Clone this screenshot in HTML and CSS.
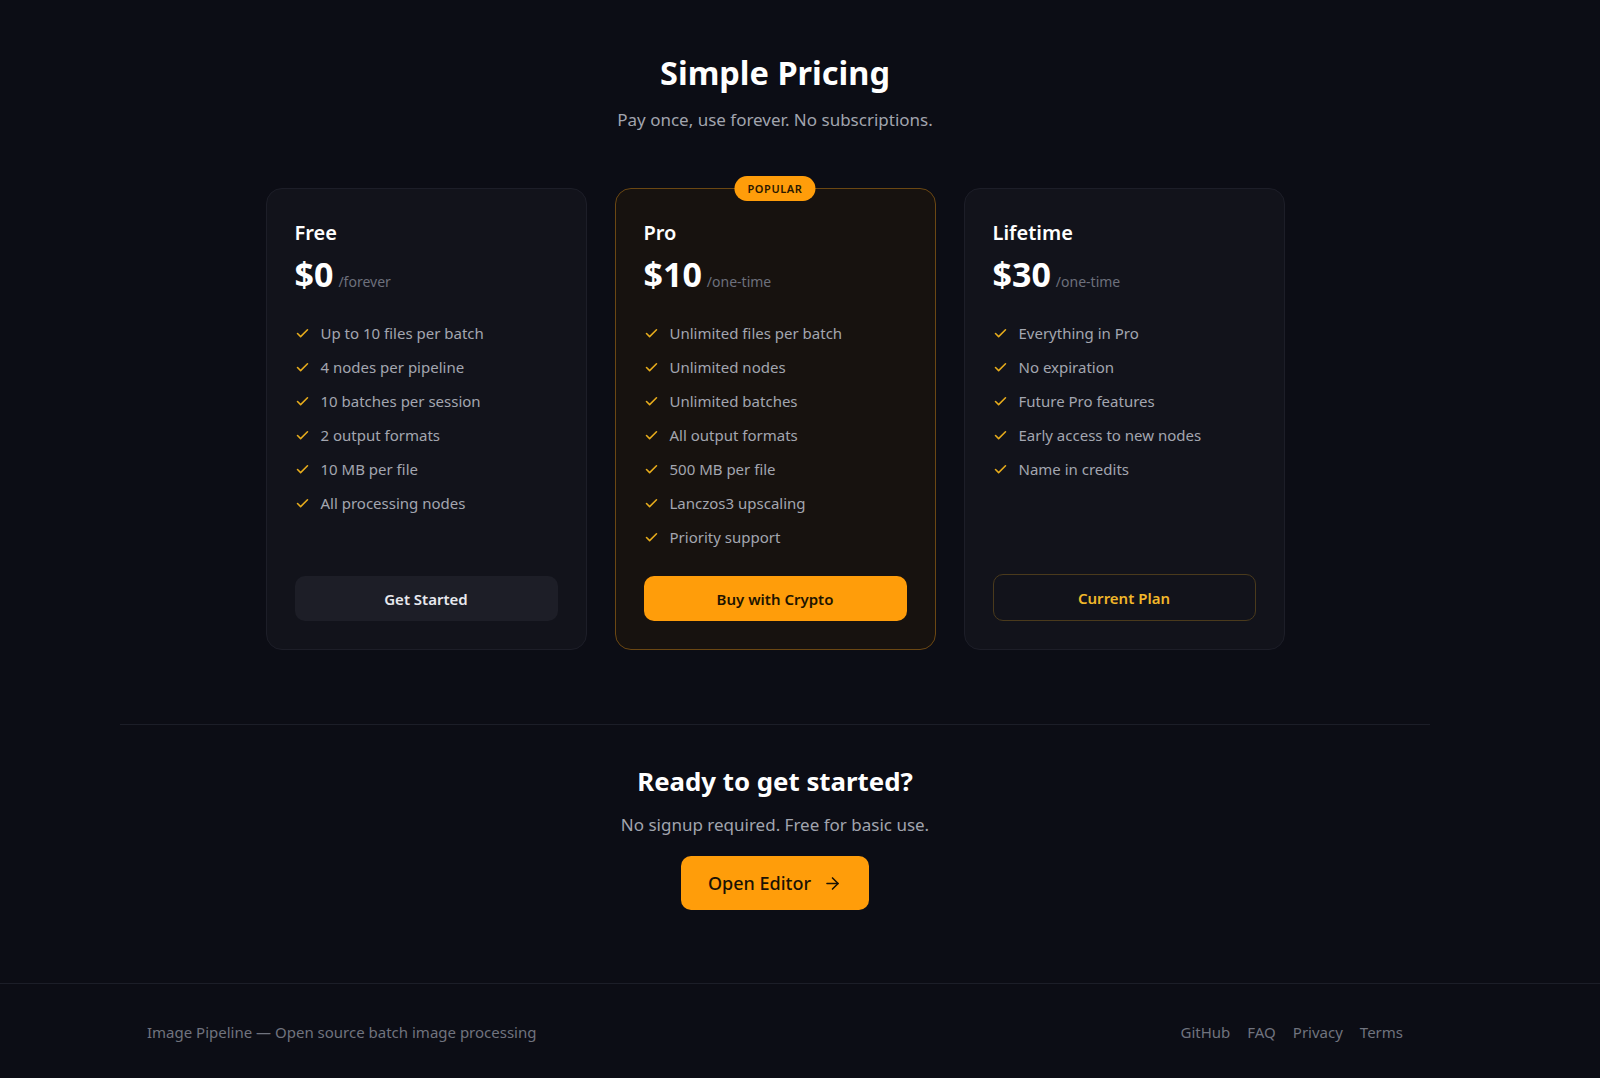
FILE: index.html
```html
<!DOCTYPE html>
<html lang="en">

<head>
    <meta charset="UTF-8">
    <meta name="viewport" content="width=device-width, initial-scale=1.0">
    <title>Image Pipeline - Pricing</title>
    <link rel="stylesheet" href="styles.css">
</head>

<body>
    <main class="page">
        <section class="pricing">
            <h1>Simple Pricing</h1>
            <p class="lead">Pay once, use forever. No subscriptions.</p>

            <div class="plans">
                <div class="plan">
                    <h3>Free</h3>
                    <div class="price"><span class="amount">$0</span><span class="per">/forever</span></div>
                    <ul class="features">
                        <li><svg viewBox="0 0 24 24"><path d="M20 6 9 17l-5-5"/></svg>Up to 10 files per batch</li>
                        <li><svg viewBox="0 0 24 24"><path d="M20 6 9 17l-5-5"/></svg>4 nodes per pipeline</li>
                        <li><svg viewBox="0 0 24 24"><path d="M20 6 9 17l-5-5"/></svg>10 batches per session</li>
                        <li><svg viewBox="0 0 24 24"><path d="M20 6 9 17l-5-5"/></svg>2 output formats</li>
                        <li><svg viewBox="0 0 24 24"><path d="M20 6 9 17l-5-5"/></svg>10 MB per file</li>
                        <li><svg viewBox="0 0 24 24"><path d="M20 6 9 17l-5-5"/></svg>All processing nodes</li>
                    </ul>
                    <button class="btn btn-dark">Get Started</button>
                </div>

                <div class="plan plan-pro">
                    <span class="badge">POPULAR</span>
                    <h3>Pro</h3>
                    <div class="price"><span class="amount">$10</span><span class="per">/one-time</span></div>
                    <ul class="features">
                        <li><svg viewBox="0 0 24 24"><path d="M20 6 9 17l-5-5"/></svg>Unlimited files per batch</li>
                        <li><svg viewBox="0 0 24 24"><path d="M20 6 9 17l-5-5"/></svg>Unlimited nodes</li>
                        <li><svg viewBox="0 0 24 24"><path d="M20 6 9 17l-5-5"/></svg>Unlimited batches</li>
                        <li><svg viewBox="0 0 24 24"><path d="M20 6 9 17l-5-5"/></svg>All output formats</li>
                        <li><svg viewBox="0 0 24 24"><path d="M20 6 9 17l-5-5"/></svg>500 MB per file</li>
                        <li><svg viewBox="0 0 24 24"><path d="M20 6 9 17l-5-5"/></svg>Lanczos3 upscaling</li>
                        <li><svg viewBox="0 0 24 24"><path d="M20 6 9 17l-5-5"/></svg>Priority support</li>
                    </ul>
                    <button class="btn btn-amber">Buy with Crypto</button>
                </div>

                <div class="plan">
                    <h3>Lifetime</h3>
                    <div class="price"><span class="amount">$30</span><span class="per">/one-time</span></div>
                    <ul class="features">
                        <li><svg viewBox="0 0 24 24"><path d="M20 6 9 17l-5-5"/></svg>Everything in Pro</li>
                        <li><svg viewBox="0 0 24 24"><path d="M20 6 9 17l-5-5"/></svg>No expiration</li>
                        <li><svg viewBox="0 0 24 24"><path d="M20 6 9 17l-5-5"/></svg>Future Pro features</li>
                        <li><svg viewBox="0 0 24 24"><path d="M20 6 9 17l-5-5"/></svg>Early access to new nodes</li>
                        <li><svg viewBox="0 0 24 24"><path d="M20 6 9 17l-5-5"/></svg>Name in credits</li>
                    </ul>
                    <button class="btn btn-outline">Current Plan</button>
                </div>
            </div>
        </section>

        <hr class="divider">

        <section class="cta">
            <h2>Ready to get started?</h2>
            <p class="lead">No signup required. Free for basic use.</p>
            <a class="btn-open" href="#">Open Editor
                <svg viewBox="0 0 24 24"><path d="M5 12h14"/><path d="m12 5 7 7-7 7"/></svg>
            </a>
        </section>
    </main>

    <footer class="site-footer">
        <div class="footer-inner">
            <span>Image Pipeline — Open source batch image processing</span>
            <nav class="footer-links">
                <a href="#">GitHub</a>
                <a href="#">FAQ</a>
                <a href="#">Privacy</a>
                <a href="#">Terms</a>
            </nav>
        </div>
    </footer>
</body>

</html>
```

FILE: styles.css
```css
* {
    margin: 0;
    padding: 0;
    box-sizing: border-box;
}

body {
    background: #0c0d15;
    color: #f3f4f6;
    font-family: 'Noto Sans', 'Open Sans', sans-serif;
}

.page {
    width: 1550px;
}

.pricing {
    padding-top: 53px;
    text-align: center;
}

.pricing h1 {
    font-size: 32.5px;
    line-height: 40px;
    font-weight: 700;
    color: #fff;
}

.lead {
    font-size: 17px;
    line-height: 26px;
    color: #a1a4ae;
    margin-top: 14px;
}

.plans {
    display: flex;
    justify-content: center;
    gap: 28px;
    margin-top: 55px;
    text-align: left;
}

.plan {
    position: relative;
    width: 321px;
    display: flex;
    flex-direction: column;
    background: #12131b;
    border: 1px solid #1d1e28;
    border-radius: 16px;
    padding: 29px 28px 28px;
}

.plan-pro {
    background: #17120f;
    border-color: #6b4713;
}

.badge {
    position: absolute;
    top: -13px;
    left: 50%;
    transform: translateX(-50%);
    background: #ff9d0a;
    color: #2a1800;
    font-size: 11px;
    font-weight: 600;
    letter-spacing: 0.6px;
    line-height: 25px;
    padding: 0 13px;
    border-radius: 13px;
}

.plan h3 {
    font-size: 20px;
    line-height: 30px;
    font-weight: 600;
    color: #fff;
}

.price {
    display: flex;
    align-items: baseline;
    gap: 5px;
    margin-top: 6px;
}

.amount {
    font-size: 34px;
    line-height: 40px;
    font-weight: 700;
    color: #fff;
}

.per {
    font-size: 14px;
    color: #6d707c;
}

.features {
    list-style: none;
    display: flex;
    flex-direction: column;
    gap: 12px;
    margin-top: 28px;
}

.features li {
    display: flex;
    align-items: center;
    gap: 11px;
    font-size: 15px;
    line-height: 22px;
    color: #a3a6b0;
}

.features svg {
    width: 15px;
    height: 15px;
    flex-shrink: 0;
    fill: none;
    stroke: #e6ab1c;
    stroke-width: 2.5;
    stroke-linecap: round;
    stroke-linejoin: round;
}

.btn {
    margin-top: auto;
    height: 45px;
    border-radius: 10px;
    border: none;
    font-family: inherit;
    font-size: 15px;
    font-weight: 600;
    cursor: pointer;
}

.plan-pro .btn {
    margin-top: 28px;
}

.btn-dark {
    background: #1d1e27;
    color: #e8e9ee;
}

.btn-amber {
    background: #ff9d0a;
    color: #1e1400;
}

.btn-outline {
    height: 47px;
    background: transparent;
    border: 1px solid #4a3a1c;
    color: #f0b72a;
}

.divider {
    border: none;
    border-top: 1px solid #1c1e28;
    margin: 74px 120px 0;
}

.cta {
    text-align: center;
    padding-top: 38px;
}

.cta h2 {
    font-size: 25.8px;
    line-height: 36px;
    font-weight: 700;
    color: #fff;
}

.cta .lead {
    margin-top: 13px;
}

.btn-open {
    display: inline-flex;
    align-items: center;
    gap: 12px;
    height: 54px;
    margin-top: 18px;
    padding: 0 27px;
    background: #ff9d0a;
    color: #1a1204;
    border-radius: 10px;
    font-size: 18px;
    font-weight: 500;
    text-decoration: none;
}

.btn-open svg {
    width: 19px;
    height: 19px;
    fill: none;
    stroke: #1a1204;
    stroke-width: 2;
    stroke-linecap: round;
    stroke-linejoin: round;
}

.site-footer {
    margin-top: 73px;
    border-top: 1px solid #1c1e28;
    padding: 37px 0 36px;
}

.footer-inner {
    width: 1550px;
    padding: 0 147px;
    display: flex;
    justify-content: space-between;
    align-items: center;
    font-size: 15px;
    line-height: 22px;
    color: #70737e;
}

.footer-links {
    display: flex;
    gap: 17px;
}

.footer-links a {
    color: #70737e;
    text-decoration: none;
}
```
